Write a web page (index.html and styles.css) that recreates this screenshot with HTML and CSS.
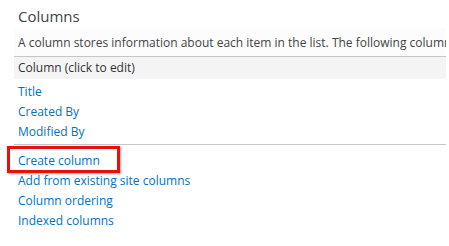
FILE: index.html
```html
<!DOCTYPE html>
<html lang="en">
<head>
    <meta charset="UTF-8">
    <title>Columns</title>
    <link rel="stylesheet" href="styles.css">
</head>
<body>
    <div class="section">
        <h2 class="section-title">Columns</h2>
        <div class="description">A column stores information about each item in the list. The following columns are currently available in this list:</div>
        <div class="table-head">Column (click to edit)</div>
        <ul class="column-list">
            <li><a href="#">Title</a></li>
            <li><a href="#">Created By</a></li>
            <li><a href="#">Modified By</a></li>
        </ul>
        <ul class="action-list">
            <li><a href="#" class="highlight">Create column</a></li>
            <li><a href="#">Add from existing site columns</a></li>
            <li><a href="#">Column ordering</a></li>
            <li><a href="#">Indexed columns</a></li>
        </ul>
    </div>
</body>
</html>
```

FILE: styles.css
```css
body {
    margin: 0;
    background-color: white;
    font-family: 'Open Sans', 'Noto Sans', sans-serif;
    font-size: 12px;
    color: #444;
    overflow: hidden;
}
.section {
    margin-left: 14px;
    width: 432px;
}
.section-title {
    margin: 0;
    padding: 7px 4px 3px;
    font-size: 15px;
    font-weight: normal;
    color: #444;
    line-height: 18px;
}
.description {
    background-color: #fcfcfc;
    padding: 0 4px;
    height: 28px;
    line-height: 30px;
    white-space: nowrap;
    overflow: hidden;
    border-bottom: 1px solid #c6c6c6;
}
.table-head {
    background-color: #f4f4f4;
    padding: 0 4px;
    height: 22px;
    line-height: 22px;
    color: #333;
}
ul {
    list-style: none;
    margin: 0;
    padding: 0;
}
.column-list {
    padding: 3px 0 2px;
    border-bottom: 1px solid #c6c6c6;
}
.action-list {
    padding-top: 6px;
}
li {
    height: 20px;
    line-height: 20px;
    padding-left: 4px;
}
a {
    color: #0072c6;
    text-decoration: none;
}
.highlight {
    position: relative;
}
.highlight::after {
    content: "";
    position: absolute;
    left: -11px;
    top: -6px;
    width: 107px;
    height: 21px;
    border: 3px solid #e8100c;
    box-shadow: 1px 1px 2px rgba(0,0,0,0.35);
}
```
